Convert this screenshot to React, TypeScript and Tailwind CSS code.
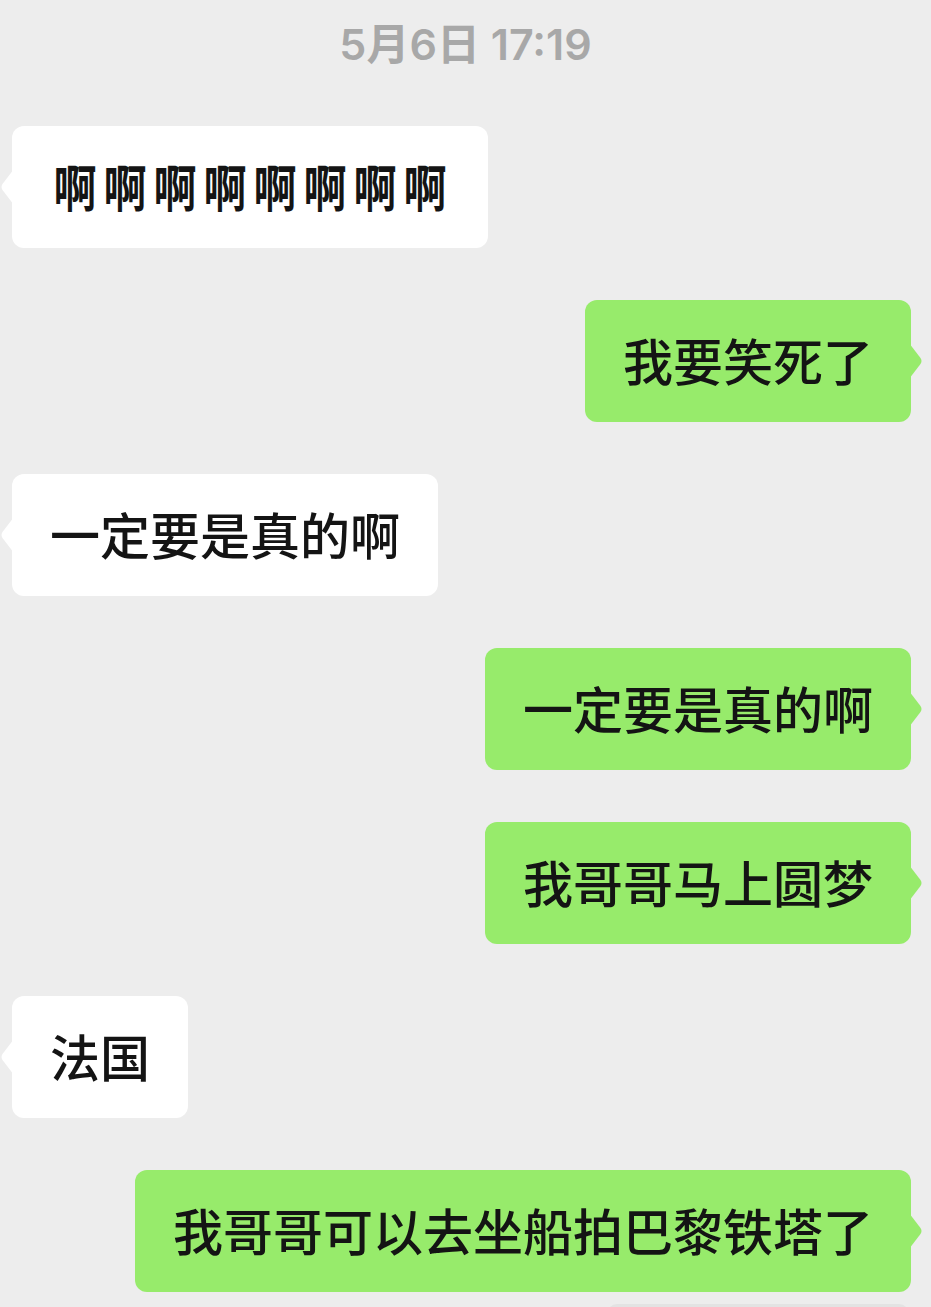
const cjk = { fontFamily: '"Noto Sans CJK SC", "Noto Sans", sans-serif' };

type Msg = { side: "left" | "right"; text: string; condensed?: boolean };

const messages: Msg[] = [
  { side: "left", text: "啊啊啊啊啊啊啊啊", condensed: true },
  { side: "right", text: "我要笑死了" },
  { side: "left", text: "一定要是真的啊" },
  { side: "right", text: "一定要是真的啊" },
  { side: "right", text: "我哥哥马上圆梦" },
  { side: "left", text: "法国" },
  { side: "right", text: "我哥哥可以去坐船拍巴黎铁塔了" },
];

function Tail({ side }: { side: "left" | "right" }) {
  const fill = side === "left" ? "#ffffff" : "#97eb6b";
  return (
    <svg
      width="14"
      height="36"
      viewBox="0 0 14 36"
      className={`absolute top-1/2 -translate-y-1/2 ${side === "left" ? "-left-[12px] -scale-x-100" : "-right-[12px]"}`}
    >
      <path d="M0 0 L11.5 15 Q13.5 18 11.5 21 L0 36 Z" fill={fill} />
    </svg>
  );
}

function Bubble({ msg }: { msg: Msg }) {
  const left = msg.side === "left";
  return (
    <div
      className={`relative rounded-[12px] px-[38px] pt-[34px] pb-[38px] ${
        left ? "self-start ml-[12px] bg-white" : "self-end mr-[20px] bg-[#97eb6b]"
      }`}
    >
      <Tail side={msg.side} />
      <div className="whitespace-nowrap text-[50px] leading-[50px] font-medium text-[#141414]" style={cjk}>
        {msg.condensed
          ? msg.text.split("").map((c, i) => (
              <span key={i} className="inline-block w-[50px] scale-x-[0.86] font-bold">
                {c}
              </span>
            ))
          : msg.text}
      </div>
    </div>
  );
}

export default function App() {
  return (
    <div className="h-[1307px] w-full overflow-hidden bg-[#ededed]">
      <div
        className="h-[88px] text-center text-[43px] leading-[88px] font-semibold text-[#a8a8a8]"
        style={{ fontFamily: 'Inter, "Noto Sans CJK SC", sans-serif' }}
      >
        5月6日 17:19
      </div>
      <div className="mt-[38px] flex flex-col gap-[52px]">
        {messages.map((m, i) => (
          <Bubble key={i} msg={m} />
        ))}
      </div>
      <div className="ml-auto mr-[22px] mt-[12px] h-[40px] w-[302px] rounded-[10px] bg-[#e3e3e3]" />
    </div>
  );
}
